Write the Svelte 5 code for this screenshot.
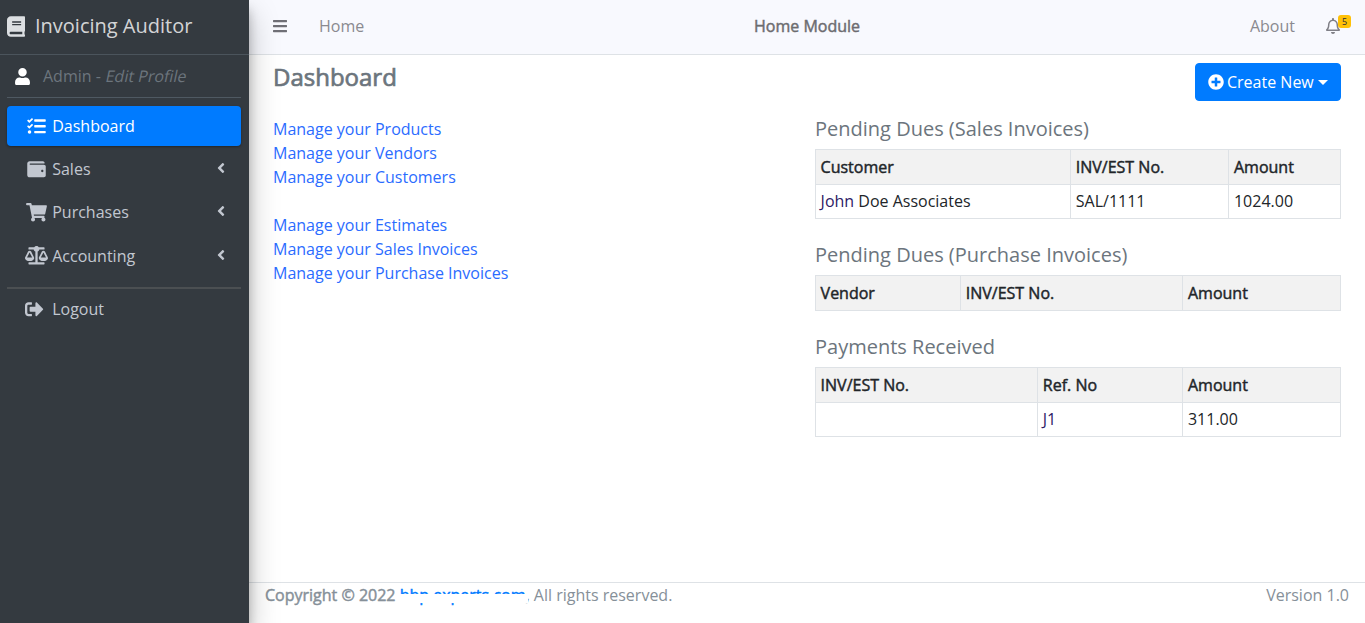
<script>
  const topLinks = ["Manage your Products", "Manage your Vendors", "Manage your Customers"];
  const docLinks = ["Manage your Estimates", "Manage your Sales Invoices", "Manage your Purchase Invoices"];
  const anglePath = "M31.700 239l136-136c9.400-9.400 24.600-9.400 33.900 0l22.600 22.600c9.400 9.400 9.400 24.600 0 33.900L127.900 256l96.400 96.400c9.400 9.400 9.400 24.600 0 33.900L201.700 409c-9.400 9.400-24.600 9.400-33.900 0l-136-136c-9.500-9.400-9.500-24.600-.1-34z";
</script>

<div class="wrapper">
  <aside class="sidebar">
    <div class="brand">
      <svg class="brand-icon" viewBox="0 0 448 512" width="18" height="21"><path fill="#dcdfe2" d="M448 360V24c0-13.300-10.700-24-24-24H96C43 0 0 43 0 96v320c0 53 43 96 96 96h328c13.300 0 24-10.700 24-24v-16c0-7.500-3.500-14.300-8.900-18.700-4.200-15.400-4.200-59.300 0-74.700 5.400-4.300 8.900-11.100 8.900-18.600zM128 134c0-3.300 2.700-6 6-6h212c3.300 0 6 2.700 6 6v20c0 3.300-2.700 6-6 6H134c-3.300 0-6-2.700-6-6v-20zm0 64c0-3.300 2.700-6 6-6h212c3.300 0 6 2.700 6 6v20c0 3.300-2.700 6-6 6H134c-3.300 0-6-2.700-6-6v-20zm253.400 250H96c-17.700 0-32-14.300-32-32 0-17.600 14.400-32 32-32h285.400c-1.900 17.100-1.900 46.900 0 64z"/></svg>
      <span>Invoicing Auditor</span>
    </div>
    <div class="user">
      <svg viewBox="0 0 448 512" width="15" height="17"><path fill="#fff" d="M224 256c70.700 0 128-57.300 128-128S294.700 0 224 0 96 57.300 96 128s57.300 128 128 128zm89.600 32h-16.700c-22.200 10.200-46.900 16-72.900 16s-50.600-5.800-72.900-16h-16.700C60.200 288 0 348.200 0 422.400V464c0 26.500 21.500 48 48 48h352c26.500 0 48-21.500 48-48v-41.600c0-74.200-60.200-134.400-134.400-134.400z"/></svg>
      <span class="user-text">Admin - <em>Edit Profile</em></span>
    </div>
    <nav class="nav">
      <div class="nav-item active">
        <svg viewBox="0 0 512 512"><path fill="#fff" d="M139.610 35.500a12 12 0 0 0-17 0L58.930 98.810l-22.700-22.120a12 12 0 0 0-17 0L3.530 92.410a12 12 0 0 0 0 17l47.590 47.400a12.780 12.780 0 0 0 17.610 0l15.590-15.620L156.520 69a12.090 12.090 0 0 0 .09-17zm0 159.190a12 12 0 0 0-17 0l-63.680 63.720-22.700-22.100a12 12 0 0 0-17 0L3.530 252a12 12 0 0 0 0 17L51 316.500a12.770 12.770 0 0 0 17.600 0l15.700-15.690 72.200-72.220a12 12 0 0 0 .09-16.900zM64 368c-26.490 0-48.590 21.500-48.590 48S37.530 464 64 464a48 48 0 0 0 0-96zm432 16H208a16 16 0 0 0-16 16v32a16 16 0 0 0 16 16h288a16 16 0 0 0 16-16v-32a16 16 0 0 0-16-16zm0-320H208a16 16 0 0 0-16 16v32a16 16 0 0 0 16 16h288a16 16 0 0 0 16-16V80a16 16 0 0 0-16-16zm0 160H208a16 16 0 0 0-16 16v32a16 16 0 0 0 16 16h288a16 16 0 0 0 16-16v-32a16 16 0 0 0-16-16z"/></svg>
        <span>Dashboard</span>
      </div>
      <div class="nav-item">
        <svg viewBox="0 0 512 512"><path fill="#c2c7d0" d="M461.200 128H80c-8.840 0-16-7.160-16-16s7.160-16 16-16h384c8.840 0 16-7.160 16-16 0-26.510-21.490-48-48-48H64C28.650 32 0 60.650 0 96v320c0 35.350 28.650 64 64 64h397.200c28.020 0 50.800-21.530 50.800-48V176c0-26.470-22.780-48-50.800-48zM416 336c-17.670 0-32-14.330-32-32s14.330-32 32-32 32 14.330 32 32-14.330 32-32 32z"/></svg>
        <span>Sales</span>
        <svg class="chev" viewBox="0 0 256 512" width="8" height="16"><path fill="#c2c7d0" d={anglePath}/></svg>
      </div>
      <div class="nav-item">
        <svg viewBox="0 0 576 512"><path fill="#c2c7d0" d="M528.120 301.319l47.273-208C578.806 78.301 567.391 64 551.990 64H159.208l-9.166-44.810C147.758 8.021 137.930 0 126.529 0H24C10.745 0 0 10.745 0 24v16c0 13.255 10.745 24 24 24h69.883l70.248 343.435C147.325 417.100 136 435.222 136 456c0 30.928 25.072 56 56 56s56-25.072 56-56c0-15.674-6.447-29.835-16.824-40h209.647C430.447 426.165 424 440.326 424 456c0 30.928 25.072 56 56 56s56-25.072 56-56c0-22.172-12.888-41.332-31.579-50.405l5.517-24.276c3.413-15.018-8.002-29.319-23.403-29.319H218.117l-6.545-32h293.145c11.206 0 20.920-7.754 23.403-18.681z"/></svg>
        <span>Purchases</span>
        <svg class="chev" viewBox="0 0 256 512" width="8" height="16"><path fill="#c2c7d0" d={anglePath}/></svg>
      </div>
      <div class="nav-item">
        <svg viewBox="0 0 640 512"><path fill="#c2c7d0" d="M256 336h-.020c0-16.180 1.340-8.730-85.050-181.510-17.650-35.290-68.190-35.360-85.870 0C-2.060 328.750.020 320.330.020 336H0c0 44.180 57.310 80 128 80s128-35.820 128-80zM128 176l72 144H56l72-144zm511.980 160c0-16.180 1.340-8.730-85.050-181.510-17.650-35.290-68.190-35.360-85.870 0-87.120 174.260-85.040 165.840-85.040 181.510H384c0 44.180 57.310 80 128 80s128-35.820 128-80h-.020zM440 320l72-144 72 144H440zm88 128H352V153.770c23.510-10.290 41.160-31.480 46.390-57.770H528c8.840 0 16-7.160 16-16V48c0-8.840-7.160-16-16-16H383.640C369.040 12.680 346.090 0 320 0s-49.040 12.680-63.640 32H112c-8.840 0-16 7.160-16 16v32c0 8.840 7.160 16 16 16h129.610c5.230 26.290 22.880 47.480 46.390 57.770V448H112c-8.840 0-16 7.160-16 16v32c0 8.840 7.160 16 16 16h416c8.840 0 16-7.160 16-16v-32c0-8.840-7.160-16-16-16z"/></svg>
        <span>Accounting</span>
        <svg class="chev" viewBox="0 0 256 512" width="8" height="16"><path fill="#c2c7d0" d={anglePath}/></svg>
      </div>
      <div class="divider"></div>
      <div class="nav-item logout">
        <svg viewBox="0 0 512 512" preserveAspectRatio="xMinYMid meet"><path fill="#c2c7d0" d="M497 273L329 441c-15 15-41 4.500-41-17v-96H152c-13.300 0-24-10.700-24-24v-96c0-13.300 10.700-24 24-24h136V88c0-21.400 25.900-32 41-17l168 168c9.300 9.400 9.300 24.600 0 34zM192 436v-40c0-6.600-5.400-12-12-12H96c-17.700 0-32-14.300-32-32V160c0-17.700 14.300-32 32-32h84c6.600 0 12-5.400 12-12V76c0-6.600-5.400-12-12-12H96c-53 0-96 43-96 96v192c0 53 43 96 96 96h84c6.600 0 12-5.400 12-12z"/></svg>
        <span>Logout</span>
      </div>
    </nav>
  </aside>

  <div class="main">
    <header class="topbar">
      <svg class="burger" viewBox="0 0 448 512" width="14" height="16"><path fill="#6f6f76" d="M16 132h416c8.837 0 16-7.163 16-16V76c0-8.837-7.163-16-16-16H16C7.163 60 0 67.163 0 76v40c0 8.837 7.163 16 16 16zm0 160h416c8.837 0 16-7.163 16-16v-40c0-8.837-7.163-16-16-16H16c-8.837 0-16 7.163-16 16v40c0 8.837 7.163 16 16 16zm0 160h416c8.837 0 16-7.163 16-16v-40c0-8.837-7.163-16-16-16H16c-8.837 0-16 7.163-16 16v40c0 8.837 7.163 16 16 16z"/></svg>
      <span class="top-link home">Home</span>
      <strong class="module">Home Module</strong>
      <span class="top-link about">About</span>
      <span class="bell">
        <svg viewBox="0 0 448 512" width="14" height="16"><path fill="#808087" d="M439.390 362.290c-19.320-20.760-55.470-51.990-55.470-154.290 0-77.700-54.480-139.900-127.940-155.160V32c0-17.670-14.320-32-31.980-32s-31.980 14.330-31.980 32v20.840C118.560 68.100 64.080 130.300 64.080 208c0 102.300-36.150 133.530-55.470 154.290-6 6.450-8.660 14.160-8.610 21.710.11 16.400 12.980 32 32.100 32h383.800c19.120 0 32-15.600 32.100-32 .05-7.550-2.610-15.270-8.610-21.710zM67.530 368c21.220-27.970 44.420-74.330 44.530-159.420 0-.2-.06-.38-.06-.58 0-61.860 50.140-112 112-112s112 50.140 112 112c0 .2-.06.38-.06.58.11 85.100 23.310 131.460 44.530 159.420H67.530zM224 512c35.320 0 63.970-28.650 63.970-64H160.030c0 35.350 28.650 64 63.970 64z"/></svg>
        <b class="badge">5</b>
      </span>
    </header>

    <main class="content">
      <div class="title-row">
        <h1>Dashboard</h1>
        <button type="button" class="create">
          <svg viewBox="0 0 512 512" width="16" height="16"><path fill="#fff" d="M256 8C119 8 8 119 8 256s111 248 248 248 248-111 248-248S393 8 256 8zm144 276c0 6.600-5.400 12-12 12h-92v92c0 6.600-5.400 12-12 12h-56c-6.600 0-12-5.400-12-12v-92h-92c-6.600 0-12-5.400-12-12v-56c0-6.600 5.400-12 12-12h92v-92c0-6.600 5.400-12 12-12h56c6.600 0 12 5.400 12 12v92h92c6.600 0 12 5.400 12 12v56z"/></svg>
          <span>Create New</span>
          <i class="caret"></i>
        </button>
      </div>

      <div class="columns">
        <div class="links">
          {#each topLinks as l}<a href="#top">{l}</a>{/each}
          <div class="gap"></div>
          {#each docLinks as l}<a href="#top">{l}</a>{/each}
        </div>

        <div class="tables">
          <h5>Pending Dues (Sales Invoices)</h5>
          <table class="t1">
            <thead><tr><th>Customer</th><th>INV/EST No.</th><th>Amount</th></tr></thead>
            <tbody><tr><td><span class="visited">John</span> Doe Associates</td><td>SAL/1111</td><td>1024.00</td></tr></tbody>
          </table>

          <h5>Pending Dues (Purchase Invoices)</h5>
          <table class="t2">
            <thead><tr><th>Vendor</th><th>INV/EST No.</th><th>Amount</th></tr></thead>
          </table>

          <h5>Payments Received</h5>
          <table class="t3">
            <thead><tr><th>INV/EST No.</th><th>Ref. No</th><th>Amount</th></tr></thead>
            <tbody><tr><td></td><td><span class="visited">J1</span></td><td>311.00</td></tr></tbody>
          </table>
        </div>
      </div>
    </main>

    <footer class="footer">
      <div><strong>Copyright © 2022 <span class="clipped">bbp experts.com</span>,</strong> All rights reserved.</div>
      <div>Version 1.0</div>
    </footer>
  </div>
</div>

<style>
  :global(body) {
    font-family: "Open Sans", sans-serif;
    font-size: 16px;
    color: #212529;
    background: #fff;
  }
  .wrapper {
    display: flex;
    height: 623px;
    overflow: hidden;
  }
  .sidebar {
    width: 249px;
    flex: none;
    background: #343a40;
    box-shadow: 0 14px 28px rgba(0, 0, 0, 0.25), 0 10px 10px rgba(0, 0, 0, 0.22);
    position: relative;
    z-index: 2;
  }
  .brand {
    height: 55px;
    box-sizing: border-box;
    border-bottom: 1px solid #4b545c;
    display: flex;
    align-items: center;
    gap: 10px;
    padding: 0 0 2px 7px;
    color: rgba(255, 255, 255, 0.8);
    font-size: 20px;
    line-height: 1;
  }
  .user {
    height: 43px;
    box-sizing: border-box;
    margin: 0 8px 0 7px;
    border-bottom: 1px solid #4f5962;
    display: flex;
    align-items: center;
    gap: 13px;
    padding-left: 8px;
    color: #6c757d;
  }
  .user em {
    /* plain upright face slanted, no true italic */
    display: inline-block;
    font-style: normal;
    margin-left: 1px;
    transform: skewX(-12deg);
  }
  .nav {
    padding: 8px 8px 0 7px;
    display: flex;
    flex-direction: column;
  }
  .nav-item {
    height: 40px;
    margin-bottom: 3.2px;
    border-radius: 4px;
    display: flex;
    align-items: center;
    padding-left: 18px;
    color: #c2c7d0;
    position: relative;
    gap: 4.2px;
  }
  .nav-item > svg:first-child {
    flex: none;
    width: 23px;
    height: 18.5px;
  }
  .nav-item.active {
    background: #007bff;
    color: #fff;
    box-shadow: 0 1px 3px rgba(0, 0, 0, 0.12), 0 1px 2px rgba(0, 0, 0, 0.24);
  }
  .chev {
    position: absolute;
    right: 16px;
    top: 11px;
  }
  .divider {
    border-top: 2px solid #4b4f52;
    margin-top: 8.5px;
  }
  .main {
    flex: 1;
    min-width: 0;
    display: flex;
    flex-direction: column;
  }
  .topbar {
    height: 55px;
    flex: none;
    box-sizing: border-box;
    background: #f8f9fe;
    border-bottom: 1px solid #dee2e6;
    display: flex;
    align-items: center;
    position: relative;
    padding: 0 0 2px 24px;
    color: #7d7d84;
  }
  .top-link {
    color: #8a8a90;
  }
  .home {
    margin-left: 32px;
  }
  /* regular face thickened: the reference has bold text at regular widths */
  .module, th, .footer strong {
    font-weight: 400;
    -webkit-text-stroke: 0.45px currentColor;
  }
  .module {
    position: absolute;
    left: 505px;
    color: #6c6c70;
  }
  .about {
    margin-left: auto;
    margin-right: 31px;
  }
  .bell {
    position: relative;
    display: flex;
    margin-right: 25px;
  }
  .badge {
    position: absolute;
    top: -3px;
    right: -11px;
    background: #ffc107;
    color: #1f2d3d;
    font-size: 9px;
    line-height: 13px;
    width: 13px;
    text-align: center;
    border-radius: 3px;
    font-weight: 400;
  }
  .content {
    flex: 1;
    padding: 0 24px;
  }
  .title-row {
    display: flex;
    justify-content: space-between;
    align-items: flex-start;
    height: 62px;
  }
  h1 {
    margin: 4px 0 0;
    font-size: 24px;
    line-height: 36px;
    font-weight: 400;
    -webkit-text-stroke: 0.7px currentColor;
    color: #6c757d;
  }
  .create {
    margin-top: 8px;
    height: 38px;
    width: 146px;
    background: #007bff;
    border: 1px solid #007bff;
    border-radius: 4px;
    color: #fff;
    font: inherit;
    display: flex;
    align-items: center;
    gap: 3px;
    padding: 0 0 0 12px;
  }
  .caret {
    border-top: 5px solid #fff;
    border-left: 5px solid transparent;
    border-right: 5px solid transparent;
    margin-left: 1px;
  }
  .columns {
    display: flex;
  }
  .links {
    width: 542px;
    flex: none;
    display: flex;
    flex-direction: column;
    align-items: flex-start;
    line-height: 24px;
  }
  .links a {
    color: #2b6cff;
    text-decoration: none;
  }
  .gap {
    height: 24px;
  }
  .tables {
    flex: 1;
    min-width: 0;
  }
  h5 {
    margin: 0 0 8px;
    font-size: 20px;
    line-height: 24px;
    font-weight: 400;
    color: #6c757d;
  }
  table {
    width: 100%;
    border-collapse: collapse;
    table-layout: fixed;
    margin-bottom: 24px;
    line-height: 24px;
  }
  th, td {
    border: 1px solid #dee2e6;
    padding: 4px 4.6px 5px;
    text-align: left;
    color: #212529;
  }
  td {
    font-weight: 400;
  }
  th {
    background: #f2f2f2;
    padding: 5px 4.6px;
  }
  .t1 th:nth-child(1) { width: 245px; }
  .t1 th:nth-child(2) { width: 148px; }
  .t2 th:nth-child(1) { width: 135px; }
  .t2 th:nth-child(2) { width: 212px; }
  .t3 th:nth-child(1) { width: 212px; }
  .t3 th:nth-child(2) { width: 135px; }
  .visited {
    color: #2d1a66;
  }
  .footer {
    flex: none;
    height: 41px;
    box-sizing: border-box;
    border-top: 1px solid #dee2e6;
    display: flex;
    justify-content: space-between;
    padding: 0 16px;
    line-height: 24px;
    color: #869099;
  }
  .clipped {
    color: #007bff;
    position: relative;
  }
  .clipped::after {
    content: "";
    position: absolute;
    left: -2px;
    right: -2px;
    top: 10px;
    height: 9px;
    background: #fff;
  }
</style>
